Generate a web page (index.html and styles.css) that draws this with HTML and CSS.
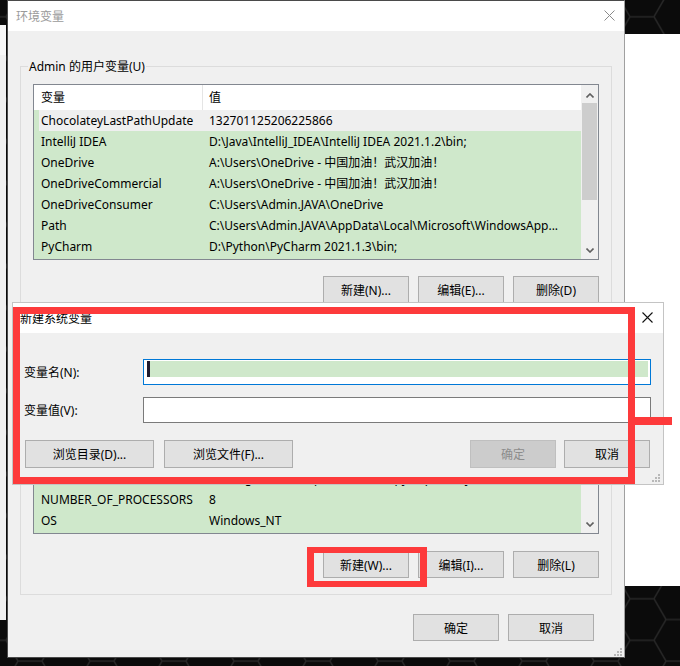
FILE: index.html
```html
<!DOCTYPE html>
<html lang="zh-CN">
<head>
<meta charset="utf-8">
<title>环境变量</title>
<link rel="stylesheet" href="styles.css">
</head>
<body>
<svg class="desktop" width="680" height="666" aria-hidden="true">
  <defs>
    <pattern id="hex" width="72" height="41.57" patternUnits="userSpaceOnUse" x="-6" y="-4">
      <path d="M12,20.78 L24,0 L48,0 L60,20.78 L48,41.57 L24,41.57 Z M0,20.78 H12 M60,20.78 H72" fill="none" stroke="#262626" stroke-width="1.5"/>
    </pattern>
  </defs>
  <rect width="680" height="666" fill="#0b0b0b"/>
  <rect width="680" height="666" fill="url(#hex)"/>
</svg>
<div class="behind-left"><div class="behind-left-top"></div></div>
<div class="behind-right"></div>

<section class="win">
  <header class="titlebar">
    <span class="title">环境变量</span>
    <svg class="close" width="11" height="11" viewBox="0 0 11 11"><path d="M0.5,0.5 L10.5,10.5 M10.5,0.5 L0.5,10.5" stroke="#8a8a8a" stroke-width="1" fill="none"/></svg>
  </header>
  <div class="win-body">
    <div class="group">
      <span class="legend">Admin 的用户变量(U)</span>
      <div class="list">
        <div class="list-main">
          <div class="list-head"><span class="c1">变量</span><span class="c2">值</span></div>
          <div class="row sel"><span class="c1">ChocolateyLastPathUpdate</span><span class="c2">132701125206225866</span></div>
          <div class="row"><span class="c1">IntelliJ IDEA</span><span class="c2">D:\Java\IntelliJ_IDEA\IntelliJ IDEA 2021.1.2\bin;</span></div>
          <div class="row"><span class="c1">OneDrive</span><span class="c2">A:\Users\OneDrive - 中国加油！武汉加油！</span></div>
          <div class="row"><span class="c1">OneDriveCommercial</span><span class="c2">A:\Users\OneDrive - 中国加油！武汉加油！</span></div>
          <div class="row"><span class="c1">OneDriveConsumer</span><span class="c2">C:\Users\Admin.JAVA\OneDrive</span></div>
          <div class="row"><span class="c1">Path</span><span class="c2">C:\Users\Admin.JAVA\AppData\Local\Microsoft\WindowsApp...</span></div>
          <div class="row"><span class="c1">PyCharm</span><span class="c2">D:\Python\PyCharm 2021.1.3\bin;</span></div>
        </div>
        <div class="vscroll">
          <div class="arrow up"><svg width="8" height="5" viewBox="0 0 8 5"><path d="M0.5,4.5 L4,1 L7.5,4.5" stroke="#606060" stroke-width="1.6" fill="none"/></svg></div>
          <div class="thumb"></div>
          <div class="track"></div>
          <div class="arrow down"><svg width="8" height="5" viewBox="0 0 8 5"><path d="M0.5,0.5 L4,4 L7.5,0.5" stroke="#606060" stroke-width="1.6" fill="none"/></svg></div>
        </div>
      </div>
      <div class="btns">
        <button class="btn">新建(N)...</button>
        <button class="btn">编辑(E)...</button>
        <button class="btn">删除(D)</button>
      </div>
    </div>

    <div class="group g2">
      <span class="legend">系统变量(S)</span>
      <div class="list">
        <div class="list-main">
          <div class="list-head"><span class="c1">变量</span><span class="c2">值</span></div>
          <div class="row"><span class="c1">ComSpec</span><span class="c2">C:\Windows\system32\cmd.exe</span></div>
          <div class="row"><span class="c1">DriverData</span><span class="c2">C:\Windows\System32\Drivers\DriverData</span></div>
          <div class="row"><span class="c1">JAVA_HOME</span><span class="c2">D:\Java\jdk1.8.0_301</span></div>
          <div class="row"><span class="c1">JRE_HOME</span><span class="c2">D:\Java\jre1.8.0_301</span></div>
          <div class="row"><span class="c1">MAVEN_HOME</span><span class="c2">D:\Program Files\apache-maven\py_repository</span></div>
          <div class="row"><span class="c1">NUMBER_OF_PROCESSORS</span><span class="c2">8</span></div>
          <div class="row"><span class="c1">OS</span><span class="c2">Windows_NT</span></div>
        </div>
        <div class="vscroll">
          <div class="arrow up"><svg width="8" height="5" viewBox="0 0 8 5"><path d="M0.5,4.5 L4,1 L7.5,4.5" stroke="#606060" stroke-width="1.6" fill="none"/></svg></div>
          <div class="track"></div>
          <div class="arrow down"><svg width="8" height="5" viewBox="0 0 8 5"><path d="M0.5,0.5 L4,4 L7.5,0.5" stroke="#606060" stroke-width="1.6" fill="none"/></svg></div>
        </div>
      </div>
      <div class="btns">
        <button class="btn">新建(W)...</button>
        <button class="btn">编辑(I)...</button>
        <button class="btn">删除(L)</button>
      </div>
    </div>

    <div class="footer">
      <button class="btn">确定</button>
      <button class="btn">取消</button>
    </div>
  </div>
  <svg class="grip" width="8" height="8" viewBox="0 0 8 8"><path d="M6,0h2v2h-2zM3,3h2v2h-2zM6,3h2v2h-2zM0,6h2v2h-2zM3,6h2v2h-2zM6,6h2v2h-2z" fill="#b8b8b8"/></svg>
</section>

<section class="dlg">
  <header class="dlg-title">
    <span>新建系统变量</span>
    <svg class="dlg-close" width="11" height="11" viewBox="0 0 11 11"><path d="M0.5,0.5 L10.5,10.5 M10.5,0.5 L0.5,10.5" stroke="#111" stroke-width="1.1" fill="none"/></svg>
  </header>
  <div class="dlg-body">
    <div class="field">
      <label class="flabel">变量名(N):</label>
      <div class="input focus"><div class="sel-row"><span class="caret"></span><span class="fill"></span></div></div>
    </div>
    <div class="field">
      <label class="flabel">变量值(V):</label>
      <div class="input"></div>
    </div>
    <div class="dlg-btns">
      <button class="btn wide">浏览目录(D)...</button>
      <button class="btn wide">浏览文件(F)...</button>
      <span class="spacer"></span>
      <button class="btn disabled">确定</button>
      <button class="btn">取消</button>
    </div>
  </div>
  <svg class="grip dlg-grip" width="8" height="8" viewBox="0 0 8 8"><path d="M6,0h2v2h-2zM3,3h2v2h-2zM6,3h2v2h-2zM0,6h2v2h-2zM3,6h2v2h-2zM6,6h2v2h-2z" fill="#b8b8b8"/></svg>
</section>

<div class="mark mark-dlg"></div>
<div class="mark-line"></div>
<div class="mark mark-btn"></div>
</body>
</html>
```

FILE: styles.css
```css
* { box-sizing: border-box; margin: 0; padding: 0; }

html, body {
  width: 680px;
  height: 666px;
  overflow: hidden;
}

body {
  position: relative;
  font-family: "Noto Sans", "Noto Sans CJK SC", sans-serif;
  font-size: 12px;
  color: #000;
  background: #0b0b0b;
}

.desktop { position: absolute; left: 0; top: 0; }

.behind-left {
  position: absolute;
  left: 0;
  top: 25px;
  width: 6px;
  height: 595px;
  background: #f0f0f0;
}
.behind-left-top { height: 30px; background: #f7f7f7; }

.behind-right {
  position: absolute;
  left: 625px;
  top: 34px;
  width: 55px;
  height: 552px;
  background: #ffffff;
}

/* main window */
.win {
  position: absolute;
  left: 7px;
  top: 0;
  width: 618px;
  height: 658px;
  background: #f0f0f0;
  border: 1px solid #4a4a4a;
  border-right-color: #a0a0a0;
}

.titlebar {
  height: 30px;
  background: #fff;
  display: flex;
  align-items: center;
  padding-left: 8px;
}
.title { color: #9a9a9a; }
.close { margin-left: auto; margin-right: 9px; margin-top: -1px; }

.win-body { padding: 35px 12px 0; }

.group {
  position: relative;
  border: 1px solid #dcdcdc;
  padding: 17px 12px 16px;
}
.group.g2 { margin-top: 20px; }

.legend {
  position: absolute;
  left: 7px;
  top: -9px;
  line-height: 17px;
  padding: 0 1px;
  background: #f0f0f0;
  white-space: nowrap;
}

.list {
  display: flex;
  width: 566px;
  height: 176px;
  border: 1px solid #828790;
  background: #cfe8cb;
}
.list-main { flex: 1; overflow: hidden; }

.list-head {
  display: flex;
  height: 25px;
  line-height: 25px;
  background: #fff;
}
.c1 {
  flex: none;
  width: 169px;
  padding-left: 7px;
  white-space: nowrap;
  overflow: hidden;
}
.c2 {
  flex: 1;
  min-width: 0;
  padding-left: 6px;
  white-space: nowrap;
  overflow: hidden;
}
.list-head .c1 { border-right: 1px solid #e5e5e5; }

.row {
  display: flex;
  height: 21px;
  line-height: 21px;
}
.row.sel { background: linear-gradient(90deg, #cfe8cb 5px, #efefef 5px); }

.vscroll {
  flex: none;
  width: 17px;
  background: #f0f0f0;
  display: flex;
  flex-direction: column;
}
.arrow {
  height: 17px;
  display: flex;
  justify-content: center;
}
.arrow.up { padding-top: 8px; }
.arrow.down { padding-top: 6px; }
.thumb {
  width: 15px;
  height: 97px;
  margin: 1px 0 0 1px;
  background: #cdcdcd;
}
.track { flex: 1; }

.btns {
  display: flex;
  justify-content: flex-end;
  gap: 9px;
  margin-top: 16px;
}
.g2 .btns { margin-top: 17px; }

.btn {
  width: 86px;
  height: 27px;
  font-family: inherit;
  font-size: 12px;
  color: #000;
  background: #e1e1e1;
  border: 1px solid #adadad;
  white-space: nowrap;
}

.footer {
  display: flex;
  justify-content: flex-end;
  gap: 9px;
  margin: 19px 18px 0 0;
}

.grip { position: absolute; right: 2px; bottom: 1px; }

/* new variable dialog */
.dlg {
  position: absolute;
  left: 12px;
  top: 302px;
  width: 652px;
  height: 183px;
  background: #f0f0f0;
  border: 1px solid #c4c4c4;
}
.dlg-title {
  height: 30px;
  background: #fff;
  display: flex;
  align-items: center;
  padding-left: 7px;
}
.dlg-close { margin-left: auto; margin-right: 10px; margin-top: -2px; }

.dlg-body { padding: 26px 12px 0 11px; }

.field {
  display: flex;
  align-items: center;
  height: 26px;
}
.field + .field { margin-top: 12px; }
.flabel { width: 119px; flex: none; }
.input {
  width: 508px;
  height: 26px;
  background: #fff;
  border: 1px solid #7a7a7a;
}
.input.focus { border-color: #0078d7; }
.sel-row {
  display: flex;
  height: 16px;
  margin: 1px 2px 0 3px;
}
.caret { width: 3px; background: #1f1b2e; }
.fill { flex: 1; background: #cfe8cb; }

.dlg-btns {
  display: flex;
  margin-top: 17px;
  padding-left: 1px;
  padding-right: 1px;
}
.btn.wide { width: 129px; height: 28px; }
.dlg-btns .btn { height: 28px; }
.dlg-btns .btn.wide + .btn.wide { margin-left: 10px; }
.spacer { flex: 1; }
.dlg-btns .btn + .btn:not(.wide) { margin-left: 8px; }
.btn.disabled {
  background: #cccccc;
  border-color: #bfbfbf;
  color: #8c8c8c;
}
.dlg-grip { right: 3px; bottom: 2px; }

/* red annotation marks */
.mark {
  position: absolute;
  border: 7px solid #fd3a3b;
}
.mark-dlg { left: 13px; top: 307px; width: 622px; height: 177px; }
.mark-btn { left: 307px; top: 547px; width: 120px; height: 40px; border-width: 6px 7px; }
.mark-line {
  position: absolute;
  left: 635px;
  top: 417px;
  width: 37px;
  height: 8px;
  background: #fd3a3b;
}
```
